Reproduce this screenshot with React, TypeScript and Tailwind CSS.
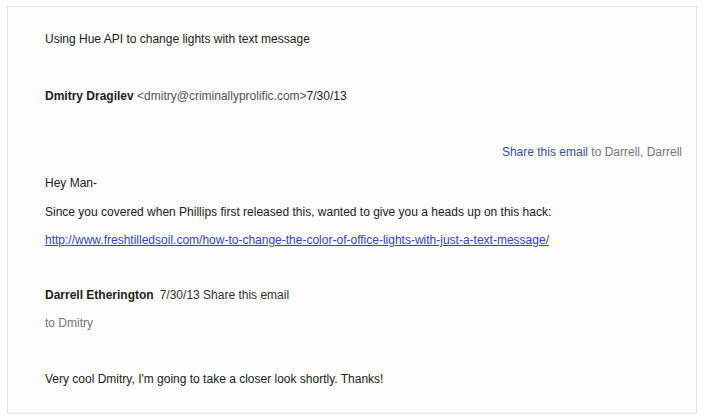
export default function App() {
  return (
    <div className="w-[705px] h-[420px] bg-white pt-[6px] pl-[7px]" style={{ fontFamily: '"Liberation Sans", Arial, sans-serif' }}>
      <div className="w-[690px] h-[408px] border border-[#e6e6e6] bg-[#fcfcfc] pl-[37px] pt-[24px] text-[12px] leading-[16px] text-[#222]">
        {/* Subject */}
        <p>Using Hue API to change lights with text message</p>

        {/* First message header */}
        <p className="mt-[41px]">
          <span className="font-bold">Dmitry Dragilev</span>{" "}
          <span className="text-[#555]">&lt;dmitry@criminallyprolific.com&gt;</span>7/30/13
        </p>

        <p className="mt-[40px] pr-[14px] text-right text-[#777]">
          <span className="text-[#3b4ea3]">Share this email</span> to Darrell, Darrell
        </p>

        {/* Body */}
        <p className="mt-[15px]">Hey Man-</p>
        <p className="mt-[13px]">
          Since you covered when Phillips first released this, wanted to give you a heads up on this hack:
        </p>
        <p className="mt-[12px]">
          <a href="#" className="text-[#3344cc] underline">
            http://www.freshtilledsoil.com/how-to-change-the-color-of-office-lights-with-just-a-text-message/
          </a>
        </p>

        {/* Reply header */}
        <p className="mt-[39px]">
          <span className="font-bold">Darrell Etherington</span>
          <span className="ml-[6px] text-[#333]">7/30/13 Share this email</span>
        </p>
        <p className="mt-[12px] text-[#777]">to Dmitry</p>

        <p className="mt-[40px]">Very cool Dmitry, I'm going to take a closer look shortly. Thanks!</p>
      </div>
    </div>
  );
}
